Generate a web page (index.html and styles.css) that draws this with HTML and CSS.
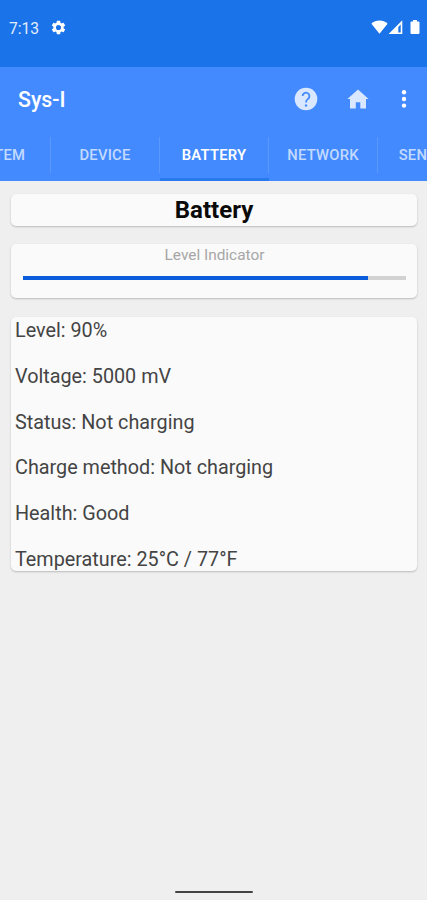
FILE: index.html
```html
<!DOCTYPE html>
<html lang="en">
<head>
    <meta charset="UTF-8">
    <meta name="viewport" content="width=device-width, initial-scale=1.0">
    <title>Sys-I</title>
    <link rel="stylesheet" href="styles.css">
</head>
<body>

    <!-- Status bar -->
    <div class="status-bar">
        <span class="time">7:13</span>
        <svg class="gear" viewBox="0 0 24 24"><path d="M19.14 12.94c.04-.3.06-.61.06-.94 0-.32-.02-.64-.07-.94l2.03-1.58a.49.49 0 0 0 .12-.61l-1.92-3.32a.49.49 0 0 0-.59-.22l-2.39.96a7 7 0 0 0-1.62-.94l-.36-2.54a.48.48 0 0 0-.48-.41h-3.84a.48.48 0 0 0-.47.41l-.36 2.54c-.59.24-1.13.57-1.62.94l-2.39-.96a.48.48 0 0 0-.59.22L2.74 8.87a.48.48 0 0 0 .12.61l2.03 1.58c-.05.3-.09.63-.09.94s.02.64.07.94l-2.03 1.58a.49.49 0 0 0-.12.61l1.92 3.32c.12.22.37.29.59.22l2.39-.96c.5.38 1.03.7 1.62.94l.36 2.54c.05.24.24.41.48.41h3.84c.24 0 .44-.17.47-.41l.36-2.54a6.8 6.8 0 0 0 1.62-.94l2.39.96c.22.08.47 0 .59-.22l1.92-3.32a.48.48 0 0 0-.12-.61zM12 15.6A3.6 3.6 0 1 1 12 8.4a3.6 3.6 0 0 1 0 7.2z"/></svg>
        <div class="status-icons">
            <svg width="17" height="14" viewBox="0 0 17 14"><path d="M.4 3.8C2.6 1.6 5.4.5 8.5.5s5.9 1.1 8.1 3.3L8.5 13.8z"/></svg>
            <svg width="15" height="14" viewBox="0 0 15 14"><path fill-rule="evenodd" d="M14.3.3V14H.6zM12.7 4.6l-2.4 2.4v5.6h2.4z"/></svg>
            <svg class="battery-icon" width="10" height="14" viewBox="0 0 10 14"><path d="M3 0h4v1.4h1.6c.5 0 .9.4.9.9v10.8c0 .5-.4.9-.9.9H1.4c-.5 0-.9-.4-.9-.9V2.3c0-.5.4-.9.9-.9H3z"/></svg>
        </div>
    </div>

    <!-- App bar and tabs -->
    <header class="app-header">
        <div class="toolbar">
            <h1>Sys-I</h1>
            <div class="actions">
                <svg class="help" viewBox="0 0 24 24"><circle cx="12" cy="12" r="11.3"/><path class="mark" d="M8.600 9.100a3.400 3.400 0 1 1 5.600 2.600c-1.300 1.100-2.200 1.700-2.200 3.700"/><circle class="dot" cx="12" cy="18.500" r="1.200"/></svg>
                <svg class="home" viewBox="0 0 22 20"><path d="M11 .4 21.6 10H19v9.4h-5.700v-6.200H8.800v6.200H3V10H.4z"/></svg>
                <svg class="more" viewBox="0 0 6 20"><circle cx="3" cy="3.2" r="2.2"/><circle cx="3" cy="10" r="2.2"/><circle cx="3" cy="16.600" r="2.2"/></svg>
            </div>
        </div>
        <nav class="tabs">
            <div class="tab">SYSTEM</div>
            <div class="tab">DEVICE</div>
            <div class="tab active">BATTERY</div>
            <div class="tab">NETWORK</div>
            <div class="tab">SENSORS</div>
        </nav>
    </header>

    <!-- Battery page -->
    <main class="content">
        <h2 class="card title-card">Battery</h2>
        <div class="card level-card">
            <div class="level-label">Level Indicator</div>
            <div class="progress"><div class="progress-fill" style="width: 90%"></div></div>
        </div>
        <div class="card info-card">
            <p>Level: 90%</p>
            <p>Voltage: 5000 mV</p>
            <p>Status: Not charging</p>
            <p>Charge method: Not charging</p>
            <p>Health: Good</p>
            <p>Temperature: 25°C / 77°F</p>
        </div>
    </main>

    <div class="nav-handle"></div>

</body>
</html>
```
FILE: styles.css
```css
body {
    font-family: Roboto, sans-serif;
    background-color: #efefef;
    margin: 0;
    height: 900px;
    display: flex;
    flex-direction: column;
    overflow: hidden;
}
h1, h2, p {
    margin: 0;
}
svg {
    fill: #fff;
    display: block;
}
.status-bar {
    height: 67px;
    box-sizing: border-box;
    padding: 18px 7px 0 9px;
    background-color: #1a73e8;
    color: #e3edfc;
    display: flex;
    align-items: flex-start;
}
.time {
    font-size: 15.6px;
    line-height: 22px;
    width: 41px;
}
.gear {
    width: 17px;
    height: 17px;
    margin-top: 1px;
}
.status-icons {
    display: flex;
    margin: 2px 0 0 auto;
}
.battery-icon {
    margin-left: 7px;
}
.app-header {
    height: 114px;
    background-color: #448aff;
    overflow: hidden;
    flex-shrink: 0;
}
.toolbar {
    height: 64px;
    display: flex;
    align-items: center;
    padding: 0 20.5px 0 18px;
}
.toolbar h1 {
    font-size: 21.3px;
    font-weight: 500;
    line-height: 26px;
    padding-top: 1px;
    color: #fff;
}
.actions {
    display: flex;
    align-items: center;
    margin-left: auto;
    margin-bottom: 1px;
}
.help {
    width: 24px;
    height: 24px;
    fill: #dae8ff;
}
.help .mark {
    fill: none;
    stroke: #448aff;
    stroke-width: 1.8;
}
.help .dot {
    fill: #448aff;
}
.home {
    width: 22px;
    height: 20px;
    margin-left: 29px;
    fill: #dae8ff;
}
.more {
    width: 6px;
    height: 20px;
    margin-left: 32px;
}
.tabs {
    display: flex;
    height: 50px;
    margin-left: -58px;
}
.tab {
    width: 109px;
    box-sizing: border-box;
    flex-shrink: 0;
    padding-right: 1px;
    text-align: center;
    font-size: 14.8px;
    font-weight: 500;
    letter-spacing: 0.2px;
    line-height: 49px;
    color: #c3daff;
    background: linear-gradient(#5a98ff, #5a98ff) right 6px / 1px 36px no-repeat;
}
.tab.active {
    color: #fff;
    font-weight: 600;
    border-bottom: 3px solid #2979ee;
}
.content {
    flex: 1;
    padding: 13px 10px 0 11px;
}
.card {
    background-color: #fafafa;
    border-radius: 5px;
    box-shadow: 0 1px 2px rgba(0, 0, 0, 0.22);
}
.title-card {
    height: 32px;
    line-height: 33px;
    text-align: center;
    font-size: 24px;
    font-weight: 700;
    color: #0a0a0a;
}
.level-card {
    height: 54px;
    margin-top: 18px;
    padding: 0 11px 0 12px;
}
.level-label {
    text-align: center;
    font-size: 15.4px;
    line-height: 22px;
    color: #a6a6a6;
}
.progress {
    height: 4px;
    margin-top: 10px;
    background-color: #d2d2d2;
}
.progress-fill {
    height: 100%;
    background-color: #0b5cdb;
}
.info-card {
    height: 254px;
    margin-top: 19px;
    padding: 1px 0 0 4px;
    box-sizing: border-box;
}
.info-card p {
    font-size: 19.8px;
    line-height: 26px;
    margin-bottom: 19.8px;
    color: #444;
}
.nav-handle {
    width: 78px;
    height: 2px;
    margin: 0 auto 7px;
    border-radius: 1px;
    background-color: #444;
}
```
